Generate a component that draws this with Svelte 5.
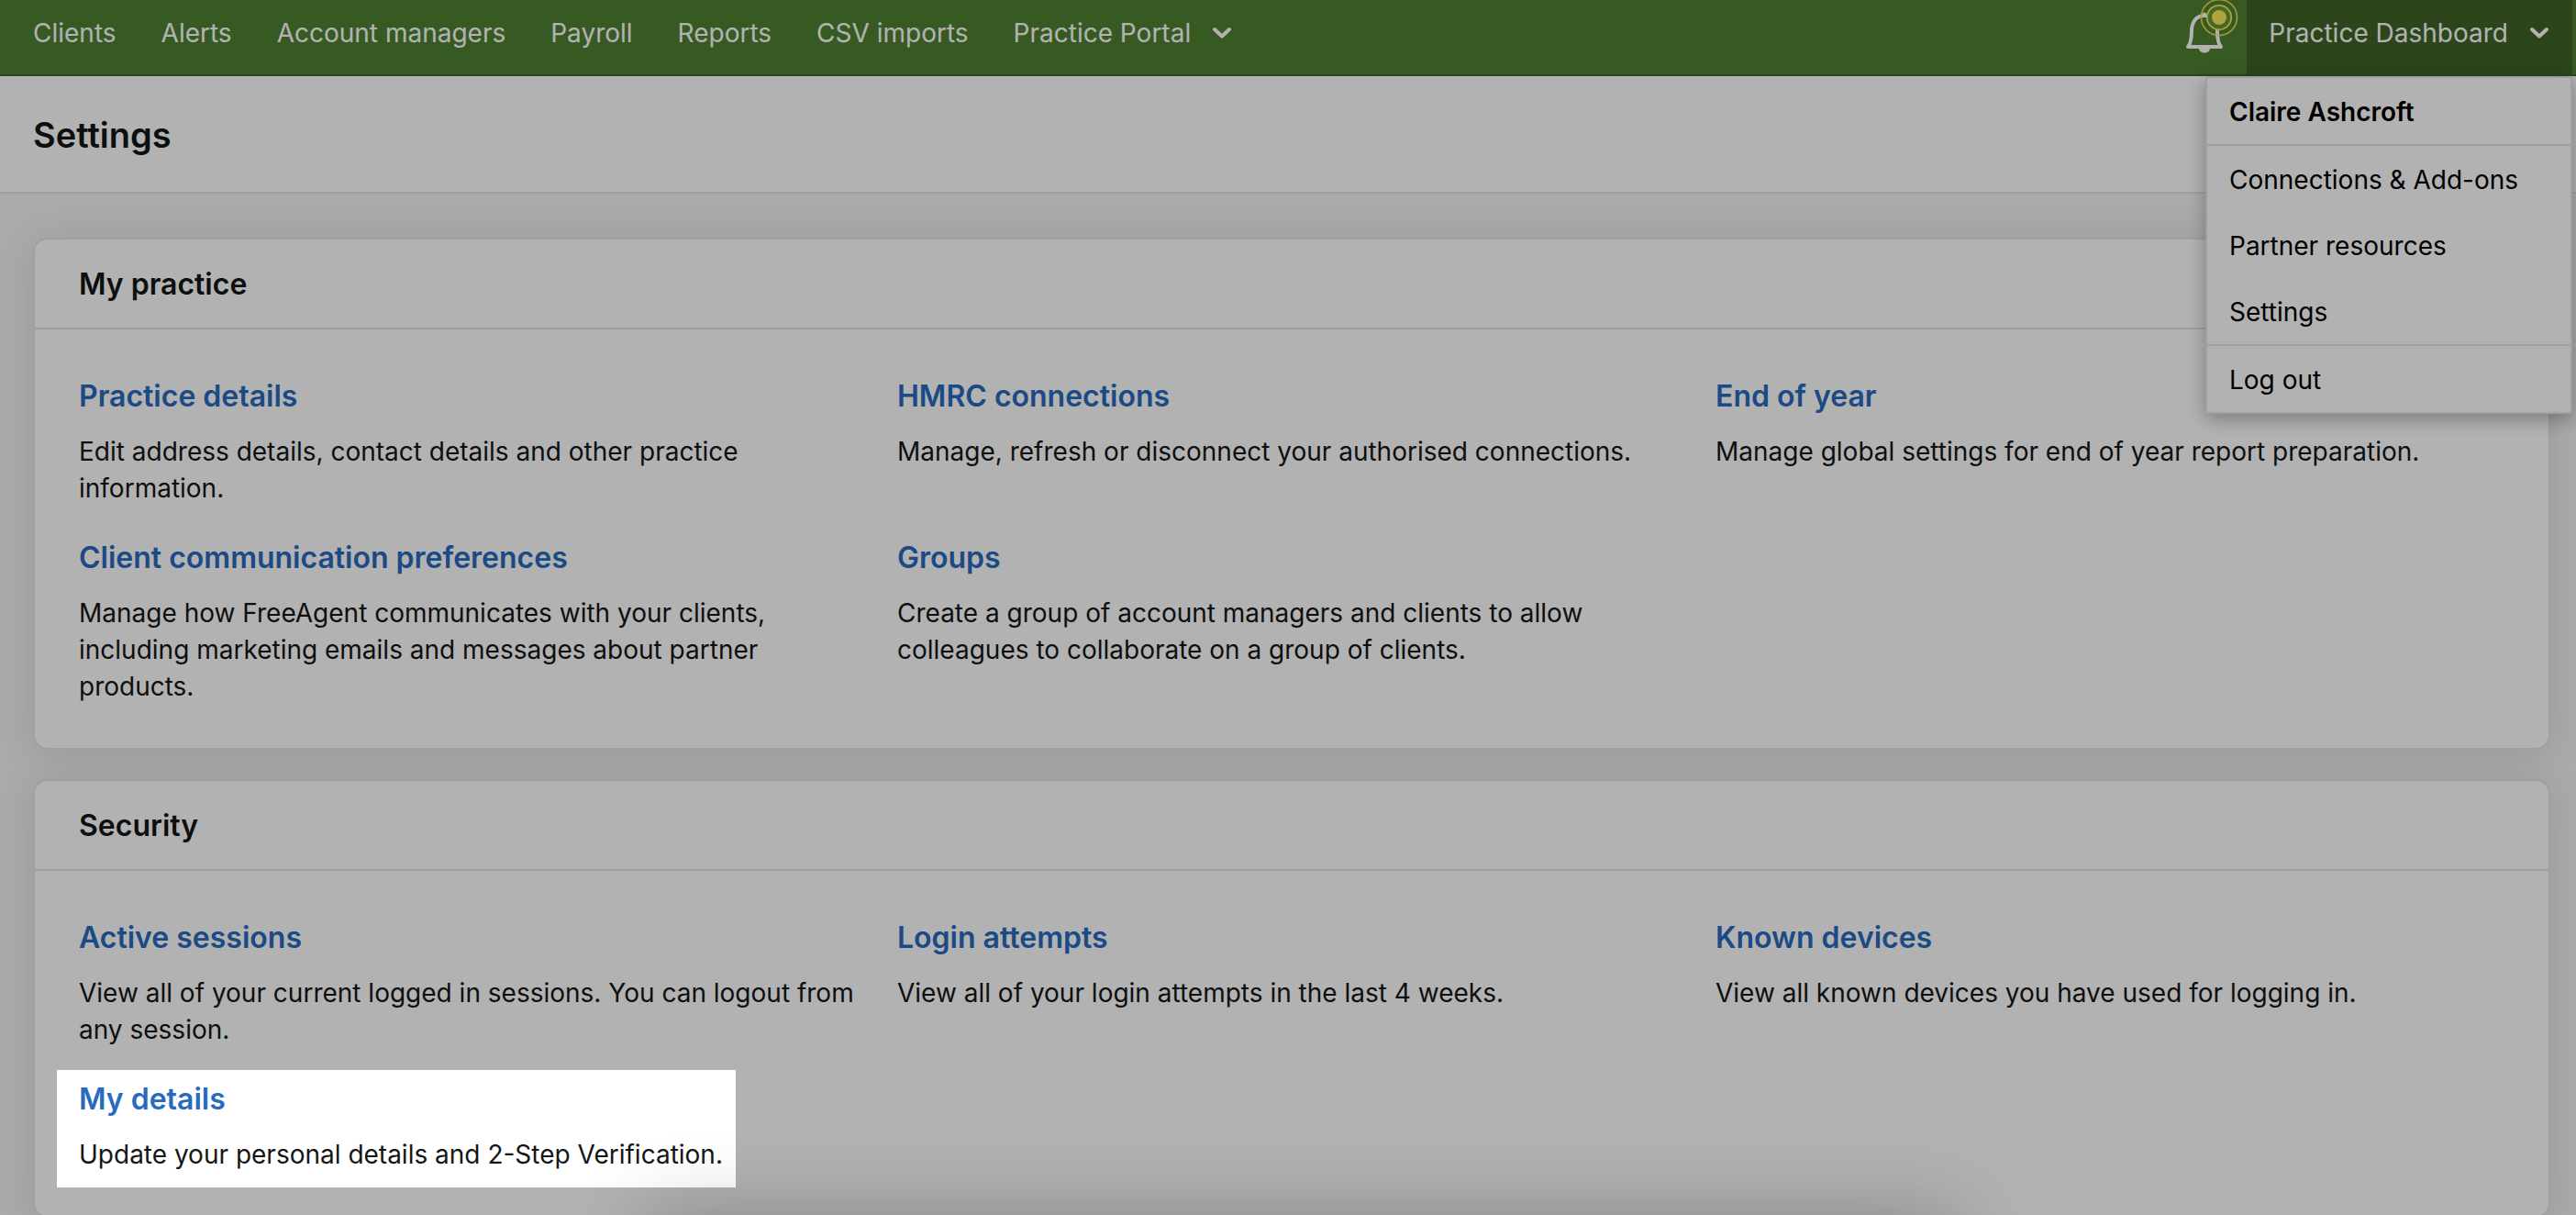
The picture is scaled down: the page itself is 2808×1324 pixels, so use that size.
<script>
  const links = ['Clients', 'Alerts', 'Account managers', 'Payroll', 'Reports', 'CSV imports'];

  const menuGroups = [
    ['Connections & Add-ons', 'Partner resources', 'Settings'],
    ['Log out']
  ];

  const sections = [
    {
      title: 'My practice',
      items: [
        { title: 'Practice details', text: 'Edit address details, contact details and other practice information.' },
        { title: 'HMRC connections', text: 'Manage, refresh or disconnect your authorised connections.' },
        { title: 'End of year', text: 'Manage global settings for end of year report preparation.' },
        {
          title: 'Client communication preferences',
          text: 'Manage how FreeAgent communicates with your clients, including marketing emails and messages about partner products.'
        },
        {
          title: 'Groups',
          text: 'Create a group of account managers and clients to allow colleagues to collaborate on a group of clients.'
        }
      ]
    },
    {
      title: 'Security',
      items: [
        { title: 'Active sessions', text: 'View all of your current logged in sessions. You can logout from any session.' },
        { title: 'Login attempts', text: 'View all of your login attempts in the last 4 weeks.' },
        { title: 'Known devices', text: 'View all known devices you have used for logging in.' },
        { title: 'My details', text: 'Update your personal details and 2-Step Verification.', spotlight: true }
      ]
    }
  ];
</script>

{#snippet chevron()}
  <svg class="chevron" viewBox="0 0 20 14" aria-hidden="true">
    <path d="M2 3 L10 10.5 L18 3" fill="none" stroke="currentColor" stroke-width="4" stroke-linecap="round" stroke-linejoin="round" />
  </svg>
{/snippet}

<div class="page">
  <header class="topbar">
    <nav class="nav" aria-label="Main">
      {#each links as link}
        <a href="#top">{link}</a>
      {/each}
      <button type="button" class="portal">Practice Portal {@render chevron()}</button>
    </nav>

    <div class="account">
      <button type="button" class="bell" aria-label="Notifications">
        <svg viewBox="0 0 48 60" aria-hidden="true">
          <g fill="none" stroke="#fff" stroke-width="4" stroke-linecap="round" stroke-linejoin="round">
            <path d="M4 51 H40 C37.500 48 36 43 36 34 C36 24 31 17 22 17 C13 17 8 24 8 34 C8 43 6.500 48 4 51 Z" />
            <path d="M22 15.500 V17" />
          </g>
          <path d="M16 53 A6 4.500 0 0 0 28 53 Z" fill="#fff" />
          <circle cx="38" cy="19" r="19.500" fill="none" stroke="#fae450" stroke-opacity=".85" stroke-width="1.800" />
          <circle cx="38" cy="19" r="13.200" fill="#5c983a" stroke="#fae450" stroke-width="1.800" />
          <circle cx="38" cy="19" r="8" fill="#ffeb57" />
        </svg>
      </button>
      <div class="switcher">
        <button type="button" class="dashboard" aria-expanded="true">
          Practice Dashboard {@render chevron()}
        </button>
        <div class="menu">
          <strong class="user">Claire Ashcroft</strong>
          {#each menuGroups as group}
            <ul>
              {#each group as entry}
                <li><a href="#top">{entry}</a></li>
              {/each}
            </ul>
          {/each}
        </div>
      </div>
    </div>
  </header>

  <div class="titlebar"><h1>Settings</h1></div>

  <main>
    {#each sections as section}
      <section class="card">
        <h2>{section.title}</h2>
        <div class="grid">
          {#each section.items as item}
            <div class="item" class:spotlight={item.spotlight}>
              <h3><a href="#top">{item.title}</a></h3>
              <p>{item.text}</p>
            </div>
          {/each}
        </div>
      </section>
    {/each}
  </main>

  <div class="sheet"></div>
</div>

<style>
  :global(body) {
    margin: 0;
    background: #f4f4f4;
  }

  .page {
    position: relative;
    height: 100vh;
    overflow: hidden;
    font-family: Inter, 'Liberation Sans', sans-serif;
    font-size: 28px;
    line-height: 40px;
    color: #141616;
    background: #f4f4f4;
  }

  a {
    color: inherit;
    text-decoration: none;
  }

  button {
    padding: 0;
    border: 0;
    font: inherit;
    color: inherit;
    background: none;
    cursor: pointer;
  }

  .topbar {
    display: flex;
    justify-content: space-between;
    padding: 0 4px 0 36px;
    border-bottom: 2px solid #3f6427;
    background: #4f8232;
    color: #fff;
  }

  .nav {
    display: flex;
    align-items: center;
    gap: 49px;
    padding: 0 0 9px;
    white-space: nowrap;
  }

  .portal,
  .dashboard {
    display: flex;
    align-items: center;
    gap: 24px;
    white-space: nowrap;
  }

  .chevron {
    width: 20px;
    height: 14px;
  }

  .account {
    display: flex;
    align-items: flex-start;
    gap: 20px;
  }

  .bell svg {
    display: block;
    width: 48px;
    height: 60px;
    overflow: visible;
  }

  .switcher {
    position: relative;
  }

  .dashboard {
    padding: 16px 26px 25px 24px;
    background: #3f6427;
  }

  .menu {
    position: absolute;
    z-index: 2;
    top: calc(100% + 2px);
    right: 0;
    box-sizing: border-box;
    width: 400px;
    border: 2px solid #e4e4eb;
    border-radius: 4px;
    background: #fff;
    color: #000;
    box-shadow: 0 6px 20px rgba(0, 0, 0, 0.3);
  }

  .user {
    display: block;
    padding: 17px 24px 15px;
    font-weight: 600;
  }

  ul {
    margin: 0;
    padding: 0;
    border-top: 2px solid #e4e4eb;
    list-style: none;
  }

  li a {
    display: block;
    padding: 17px 24px 15px;
  }

  .titlebar {
    padding: 40px 36px 38px;
    border-bottom: 2px solid #e4e4eb;
    background: #fff;
  }

  h1,
  h2,
  h3,
  p {
    margin: 0;
  }

  h1 {
    font-size: 38px;
    line-height: 48px;
    font-weight: 600;
  }

  main {
    display: grid;
    gap: 32px;
    padding: 48px 28px 48px 36px;
  }

  .card {
    border: 2px solid #e4e4eb;
    border-radius: 16px;
    background: #fff;
    box-shadow: 0 4px 40px rgba(20, 50, 70, 0.12);
  }

  h2 {
    padding: 25px 48px 23px;
    border-bottom: 2px solid #e4e4eb;
    font-size: 32px;
    line-height: 48px;
    font-weight: 600;
  }

  .grid {
    display: grid;
    grid-template-columns: repeat(3, 1fr);
    gap: 32px;
    padding: 49px 48px 47px;
  }

  h3 {
    margin-bottom: 16px;
    font-size: 32px;
    line-height: 48px;
    font-weight: 600;
    color: #276bbf;
  }

  /* Tour step: everything outside the spotlit item is dimmed. */
  .spotlight {
    position: relative;
    z-index: 3;
    justify-self: start;
  }

  .spotlight::after {
    content: '';
    position: absolute;
    inset: -8px -14px -16px -24px;
    box-shadow: 0 0 0 4000px rgba(0, 0, 0, 0.3);
    pointer-events: none;
  }

  /* Panel waiting below the fold; only its shadow reaches the page. */
  .sheet {
    position: absolute;
    z-index: 4;
    top: 100%;
    left: 25%;
    right: 24%;
    height: 320px;
    border-radius: 16px;
    box-shadow: 0 0 90px rgba(0, 0, 0, 0.24);
  }
</style>
